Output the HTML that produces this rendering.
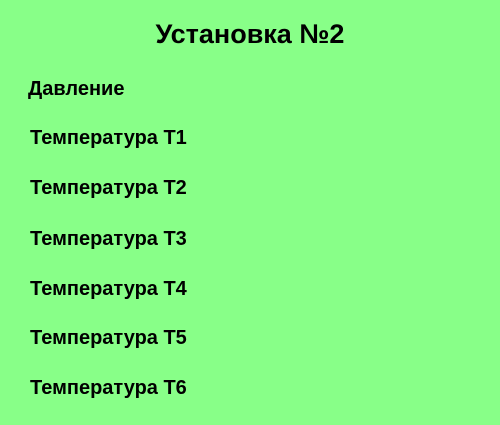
<!DOCTYPE html>
<html><head><meta charset="utf-8"><style>
html,body{margin:0;padding:0;width:500px;height:425px;background:#88ff88;overflow:hidden}
body{font-family:"Liberation Sans",Arial,sans-serif;font-weight:bold;color:#000;position:relative}
.t{position:absolute;left:0;width:500px;text-align:center;top:19px;font-size:27px;line-height:30px}
.l{position:absolute;font-size:20px;line-height:20px}
</style></head><body>
<div class="t">Установка №2</div>
<div class="l" style="left:28px;top:79px">Давление</div>
<div class="l" style="left:30px;top:128px">Температура Т1</div>
<div class="l" style="left:30px;top:178px">Температура Т2</div>
<div class="l" style="left:30px;top:229px">Температура Т3</div>
<div class="l" style="left:30px;top:279px">Температура Т4</div>
<div class="l" style="left:30px;top:328px">Температура Т5</div>
<div class="l" style="left:30px;top:378px">Температура Т6</div>
</body></html>
